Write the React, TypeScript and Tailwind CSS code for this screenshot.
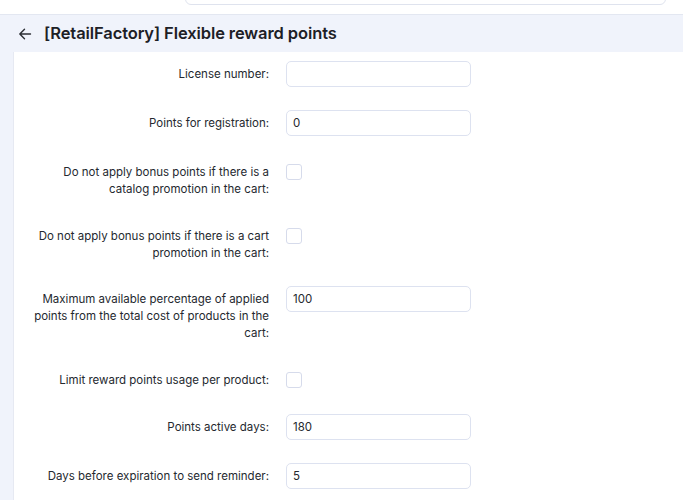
import React from "react";

type Row =
  | { kind: "text"; label: string[]; value: string }
  | { kind: "check"; label: string[] };

const rows: { row: Row; h: string }[] = [
  { row: { kind: "text", label: ["License number:"], value: "" }, h: "h-[49px]" },
  { row: { kind: "text", label: ["Points for registration:"], value: "0" }, h: "h-[53px]" },
  {
    row: { kind: "check", label: ["Do not apply bonus points if there is a", "catalog promotion in the cart:"] },
    h: "h-[64px]",
  },
  {
    row: { kind: "check", label: ["Do not apply bonus points if there is a cart", "promotion in the cart:"] },
    h: "h-[59px]",
  },
  {
    row: {
      kind: "text",
      label: ["Maximum available percentage of applied", "points from the total cost of products in the", "cart:"],
      value: "100",
    },
    h: "h-[85px]",
  },
  { row: { kind: "check", label: ["Limit reward points usage per product:"] }, h: "h-[43px]" },
  { row: { kind: "text", label: ["Points active days:"], value: "180" }, h: "h-[49px]" },
  { row: { kind: "text", label: ["Days before expiration to send reminder:"], value: "5" }, h: "h-[49px]" },
];

function Field({ row }: { row: Row }) {
  return (
    <div className="flex items-start">
      <div
        className={`w-[241px] text-right text-[11.5px] leading-[17px] text-[#25292f] whitespace-nowrap ${
          row.kind === "text" ? "pt-[5px]" : "pt-[1px]"
        }`}
      >
        {row.label.map((l) => (
          <div key={l}>{l}</div>
        ))}
      </div>
      <div className="ml-[17px]">
        {row.kind === "text" ? (
          <div className="w-[185px] h-[26px] rounded-[5px] border border-[#dde2f0] bg-white px-[6px] pt-[1px] flex items-center text-[11.5px] text-[#25282d]">
            {row.value}
          </div>
        ) : (
          <div className="mt-[1px] w-[16px] h-[16px] rounded-[3px] border border-[#d6dbeb] bg-white" />
        )}
      </div>
    </div>
  );
}

export default function App() {
  return (
    <div
      className="w-[683px] h-[500px] overflow-hidden bg-white"
      style={{ fontFamily: "Inter, 'Noto Sans', sans-serif" }}
    >
      {/* search field strip at the top */}
      <div className="h-[15px] relative border-b border-[#e3e7f1]">
        <div className="absolute left-[185px] right-[17px] top-[-10px] h-[15px] rounded-b-[6px] border border-[#dfe3ee] bg-white" />
      </div>
      {/* page header */}
      <div className="bg-[#f0f3fb] h-[37px] flex items-center pl-[18px]">
        <svg
          width="14"
          height="14"
          viewBox="0 0 14 14"
          fill="none"
          stroke="#2a2d33"
          strokeWidth="1.4"
          strokeLinecap="round"
          strokeLinejoin="round"
        >
          <path d="M12.5 7H1.8M6.5 2.3 1.8 7l4.7 4.7" />
        </svg>
        <h1 className="ml-[12px] text-[16.5px] font-semibold text-[#1d2026] tracking-[-0.1px]">
          [RetailFactory] Flexible reward points
        </h1>
      </div>
      {/* form panel */}
      <div className="flex">
        <div className="w-[13px] bg-[#f0f3fb] h-[448px]" />
        <div className="flex-1 bg-white border-l border-[#e6e9f2] pl-[14px] pt-[9px] flex flex-col">
          {rows.map(({ row, h }, i) => (
            <div key={i} className={h}>
              <Field row={row} />
            </div>
          ))}
        </div>
      </div>
    </div>
  );
}
